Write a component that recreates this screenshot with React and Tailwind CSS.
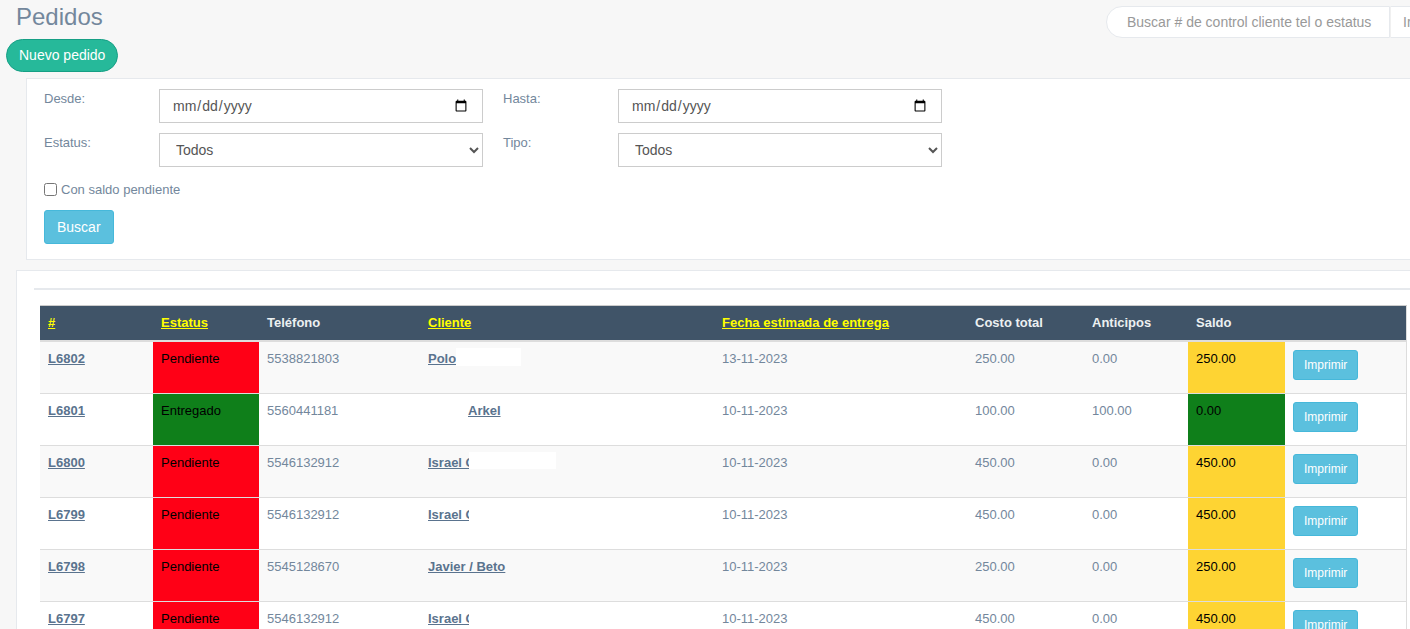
import React from 'react';

const rows = [
  { id: 'L6802', status: 'Pendiente', tel: '5538821803', client: 'polo', fecha: '13-11-2023', costo: '250.00', ant: '0.00', saldo: '250.00' },
  { id: 'L6801', status: 'Entregado', tel: '5560441181', client: 'arkel', fecha: '10-11-2023', costo: '100.00', ant: '100.00', saldo: '0.00' },
  { id: 'L6800', status: 'Pendiente', tel: '5546132912', client: 'israelBox', fecha: '10-11-2023', costo: '450.00', ant: '0.00', saldo: '450.00' },
  { id: 'L6799', status: 'Pendiente', tel: '5546132912', client: 'israel', fecha: '10-11-2023', costo: '450.00', ant: '0.00', saldo: '450.00' },
  { id: 'L6798', status: 'Pendiente', tel: '5545128670', client: 'javier', fecha: '10-11-2023', costo: '250.00', ant: '0.00', saldo: '250.00' },
  { id: 'L6797', status: 'Pendiente', tel: '5546132912', client: 'israel', fecha: '10-11-2023', costo: '450.00', ant: '0.00', saldo: '450.00' },
];

const linkCls = 'font-bold underline text-[#5A738E]';

// client names are partly blanked out in the screenshot
const Client = ({ kind }) => {
  if (kind === 'polo') {
    return (
      <span className="whitespace-nowrap">
        <a href="#" className={linkCls}>Polo</a>
        <span className="inline-block align-top -mt-[2px] w-[65px] h-[18px] bg-white" />
      </span>
    );
  }
  if (kind === 'arkel') {
    return (
      <span className="whitespace-nowrap">
        <span className="inline-block align-top w-[40px] h-[18px] bg-white" />
        <a href="#" className={linkCls}>Arkel</a>
      </span>
    );
  }
  if (kind === 'javier') {
    return <a href="#" className={linkCls}>Javier / Beto</a>;
  }
  return (
    <span className="whitespace-nowrap">
      <a href="#" className={`${linkCls} inline-block align-top overflow-hidden whitespace-nowrap w-[41px]`}>Israel C</a>
      {kind === 'israelBox' && (
        <span className="inline-block align-top -mt-[2px] w-[87px] h-[17px] bg-white" />
      )}
    </span>
  );
};

const Field = ({ label, children, first }) => (
  <>
    <div className={`w-[115px] shrink-0 leading-[20px] ${first ? '' : 'ml-[20px]'}`}>{label}</div>
    {children}
  </>
);

const inputCls = 'w-[324px] h-[34px] shrink-0 border border-[#ccc] bg-white px-[12px] text-[14px] text-[#555]';

export default function App() {
  return (
    <div className="w-[1410px] h-[629px] overflow-hidden bg-[#f7f7f7] font-['Liberation_Sans',Arial,sans-serif] text-[13px] text-[#73879C]">
      <div className="w-[1470px]">
        {/* top bar */}
        <div className="flex items-start">
          <div className="w-[1106px] shrink-0">
            <h3 className="ml-[16px] mt-[4px] text-[24px] leading-[26px] text-[#73879C]">Pedidos</h3>
            <button className="ml-[6px] mt-[9px] h-[33px] px-[12px] rounded-full border border-[#169F85] bg-[#26B99A] text-[14px] text-white">
              Nuevo pedido
            </button>
          </div>
          <div className="mt-[6px] flex">
            <input
              placeholder="Buscar # de control cliente tel o estatus"
              className="w-[284px] h-[32px] rounded-l-full border border-[#e6e9ed] bg-white pl-[20px] text-[14px] text-[#555] placeholder:text-[#999]"
            />
            <button className="h-[32px] px-[12px] rounded-r-full border border-l-[#f0f0f0] border-[#e6e9ed] bg-white text-[14px] text-[#999]">
              Ir
            </button>
          </div>
        </div>

        {/* filters */}
        <div className="ml-[26px] mt-[6px] border border-[#E6E9ED] bg-white pl-[17px] pt-[10px] pb-[15px]">
          <div className="flex">
            <Field label="Desde:" first>
              <input type="date" className={inputCls} />
            </Field>
            <Field label="Hasta:">
              <input type="date" className={inputCls} />
            </Field>
          </div>
          <div className="flex mt-[10px]">
            <Field label="Estatus:" first>
              <select className={inputCls}>
                <option>Todos</option>
              </select>
            </Field>
            <Field label="Tipo:">
              <select className={inputCls}>
                <option>Todos</option>
              </select>
            </Field>
          </div>
          <label className="mt-[13px] flex items-center h-[19px]">
            <input type="checkbox" className="w-[13px] h-[13px] mr-[4px]" />
            <span>Con saldo pendiente</span>
          </label>
          <button className="mt-[11px] h-[34px] px-[12px] rounded-[3px] border border-[#46b8da] bg-[#5bc0de] text-[14px] text-white">
            Buscar
          </button>
        </div>

        {/* table panel */}
        <div className="ml-[16px] mt-[10px] border border-[#E6E9ED] bg-white pl-[17px] pt-[17px]">
          <div className="h-[2px] bg-[#E6E9ED]" />
          <table className="ml-[6px] mt-[15px] w-[1366px] table-fixed border-collapse border-r border-[#ddd]">
            <colgroup>
              <col className="w-[113px]" />
              <col className="w-[106px]" />
              <col className="w-[161px]" />
              <col className="w-[294px]" />
              <col className="w-[253px]" />
              <col className="w-[117px]" />
              <col className="w-[104px]" />
              <col className="w-[97px]" />
              <col className="w-[121px]" />
            </colgroup>
            <thead>
              <tr className="bg-[#405468] text-[#ECF0F1] border-t border-[#ccc] border-b-2 border-b-[#ddd]">
                <th className="p-[8px] text-left leading-[18px] font-bold"><a href="#" className="underline text-[#ffff00]">#</a></th>
                <th className="p-[8px] text-left leading-[18px] font-bold"><a href="#" className="underline text-[#ffff00]">Estatus</a></th>
                <th className="p-[8px] text-left leading-[18px] font-bold">Teléfono</th>
                <th className="p-[8px] text-left leading-[18px] font-bold"><a href="#" className="underline text-[#ffff00]">Cliente</a></th>
                <th className="p-[8px] text-left leading-[18px] font-bold"><a href="#" className="underline text-[#ffff00]">Fecha estimada de entrega</a></th>
                <th className="p-[8px] text-left leading-[18px] font-bold">Costo total</th>
                <th className="p-[8px] text-left leading-[18px] font-bold">Anticipos</th>
                <th className="p-[8px] text-left leading-[18px] font-bold">Saldo</th>
                <th className="p-[8px]" />
              </tr>
            </thead>
            <tbody>
              {rows.map((r, i) => {
                const done = r.status === 'Entregado';
                return (
                  <tr key={r.id} className={i % 2 === 0 ? 'bg-[#f9f9f9]' : 'bg-white'}>
                    <td className="p-[8px] align-top leading-[18px] border-t border-[#ddd]">
                      <a href="#" className={linkCls}>{r.id}</a>
                    </td>
                    <td className={`p-[8px] align-top leading-[18px] border-t border-[#ddd] text-black ${done ? 'bg-[#0f7f1a]' : 'bg-[#ff0016]'}`}>
                      {r.status}
                    </td>
                    <td className="p-[8px] align-top leading-[18px] border-t border-[#ddd]">{r.tel}</td>
                    <td className="p-[8px] align-top leading-[18px] border-t border-[#ddd]"><Client kind={r.client} /></td>
                    <td className="p-[8px] align-top leading-[18px] border-t border-[#ddd]">{r.fecha}</td>
                    <td className="p-[8px] align-top leading-[18px] border-t border-[#ddd]">{r.costo}</td>
                    <td className="p-[8px] align-top leading-[18px] border-t border-[#ddd]">{r.ant}</td>
                    <td className={`p-[8px] align-top leading-[18px] border-t border-[#ddd] text-black ${done ? 'bg-[#0f7f1a]' : 'bg-[#fed433]'}`}>
                      {r.saldo}
                    </td>
                    <td className="p-[8px] align-top leading-[18px] border-t border-[#ddd]">
                      <button className="mb-[5px] h-[30px] px-[10px] rounded-[3px] border border-[#46b8da] bg-[#5bc0de] text-[12px] leading-[18px] text-white">
                        Imprimir
                      </button>
                    </td>
                  </tr>
                );
              })}
            </tbody>
          </table>
        </div>
      </div>
    </div>
  );
}
